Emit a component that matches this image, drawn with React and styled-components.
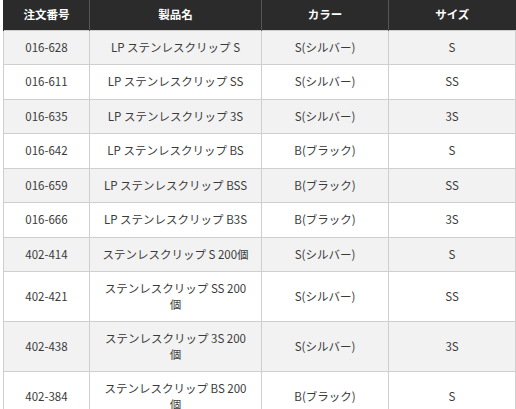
import React from 'react';
import styled, { createGlobalStyle } from 'styled-components';

const GlobalStyle = createGlobalStyle`
  body {
    margin: 0;
    background: #fff;
    font-family: "Noto Sans CJK JP", "Noto Sans", sans-serif;
  }
`;

const rows = [
  ['016-628', 'LP ステンレスクリップ S', 'S(シルバー)', 'S'],
  ['016-611', 'LP ステンレスクリップ SS', 'S(シルバー)', 'SS'],
  ['016-635', 'LP ステンレスクリップ 3S', 'S(シルバー)', '3S'],
  ['016-642', 'LP ステンレスクリップ BS', 'B(ブラック)', 'S'],
  ['016-659', 'LP ステンレスクリップ BSS', 'B(ブラック)', 'SS'],
  ['016-666', 'LP ステンレスクリップ B3S', 'B(ブラック)', '3S'],
  ['402-414', 'ステンレスクリップ S 200個', 'S(シルバー)', 'S'],
  ['402-421', 'ステンレスクリップ SS 200個', 'S(シルバー)', 'SS'],
  ['402-438', 'ステンレスクリップ 3S 200個', 'S(シルバー)', '3S'],
  ['402-384', 'ステンレスクリップ BS 200個', 'B(ブラック)', 'S'],
];

const App = () => {
  return (
    <>
      <GlobalStyle />
      <Wrap>
        <Table>
          <colgroup>
            <col style={{ width: 86 }} />
            <col style={{ width: 172 }} />
            <col style={{ width: 127 }} />
            <col style={{ width: 127 }} />
          </colgroup>
          <thead>
            <tr>
              <Th>注文番号</Th>
              <Th>製品名</Th>
              <Th>カラー</Th>
              <Th>サイズ</Th>
            </tr>
          </thead>
          <tbody>
            {rows.map((r, i) => (
              <Row key={r[0]} $odd={i % 2 === 0}>
                {r.map((c, j) => (
                  <Td key={j}>{c}</Td>
                ))}
              </Row>
            ))}
          </tbody>
        </Table>
      </Wrap>
    </>
  );
};

export default App;

const Wrap = styled.div`
  padding-left: 3px;
`;

const Table = styled.table`
  width: 512px;
  table-layout: fixed;
  border-collapse: collapse;
  font-family: "Noto Sans CJK JP", sans-serif;
  font-size: 11.5px;
  line-height: 15.5px;
  color: #3a3a3a;
`;

const Th = styled.th`
  background: #2b2b2b;
  color: #fff;
  font-weight: bold;
  padding: 7px 12px;
  border-left: 1px solid #555;
  text-align: center;
  &:first-child {
    border-left: 1px solid #2b2b2b;
  }
`;

const Row = styled.tr`
  background: ${(p) => (p.$odd ? '#f2f2f2' : '#fff')};
`;

const Td = styled.td`
  padding: 9px 12px;
  border: 1px solid #cfcfcf;
  color: #3a3a3a;
  text-align: center;
  vertical-align: middle;
`;
